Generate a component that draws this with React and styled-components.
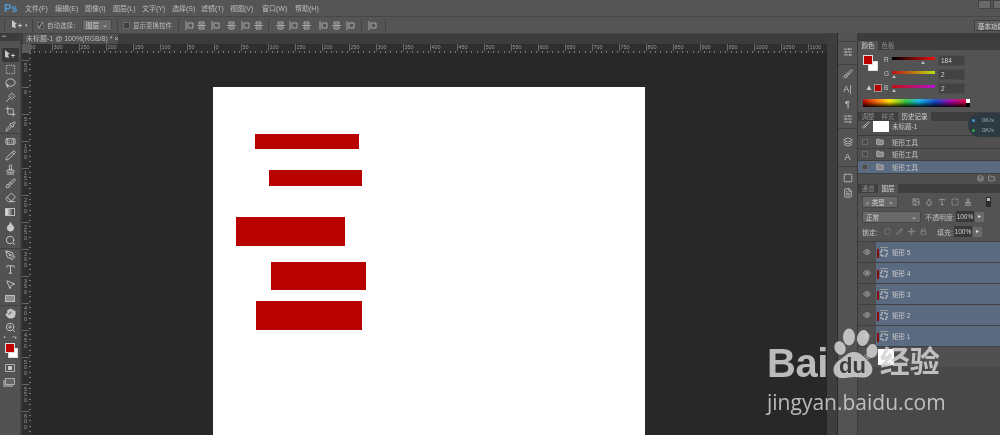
import styled, { createGlobalStyle } from "styled-components";
import {
  MousePointer2,
  SquareDashed,
  Lasso,
  Wand,
  Crop,
  Pipette,
  Bandage,
  Pencil,
  Stamp,
  Brush,
  Eraser,
  Droplet,
  Search,
  PenTool,
  Type,
  Hand,
  ZoomIn,
  Eye,
  Lock,
  Move,
  Image,
  Folder,
  SlidersHorizontal,
  Square,
  Layers,
  FileText,
} from "lucide-react";

const GlobalStyle = createGlobalStyle`
  html, body {
    margin: 0;
    padding: 0;
    background: #535353;
  }
  * {
    box-sizing: border-box;
  }
`;

const FONT = `"Liberation Sans", "Noto Sans CJK SC", sans-serif`;

const Root = styled.div`
  position: relative;
  display: flex;
  flex-direction: column;
  width: 1000px;
  height: 435px;
  overflow: hidden;
  background: #535353;
  color: #c4c4c4;
  font-family: ${FONT};
  font-size: 6.5px;
  filter: blur(0.3px);
`;

const MenuBar = styled.div`
  display: flex;
  align-items: center;
  height: 16px;
  flex: none;
  padding-left: 4px;
  background: #555555;
`;
const PsLogo = styled.span`
  width: 21px;
  color: #4f9bd8;
  font-size: 11px;
  font-weight: bold;
`;
const MenuItem = styled.span`
  width: ${(p) => p.$w}px;
  color: #bdbdbd;
  font-size: 7px;
  white-space: nowrap;
`;
const WindowButtons = styled.div`
  display: flex;
  gap: 2px;
  margin-left: auto;
  margin-right: -6px;
  align-self: flex-start;
`;
const WindowButton = styled.div`
  width: 13px;
  height: 9px;
  background: #6a6a6a;
  border: 1px solid #444;
`;

const OptionsBar = styled.div`
  display: flex;
  align-items: center;
  height: 17px;
  flex: none;
  background: #555555;
  border-top: 1px solid #474747;
  padding-left: 4px;
`;
const OptionSep = styled.div`
  width: 1px;
  height: 13px;
  flex: none;
  background: #444;
  margin: 0 ${(p) => p.$m}px;
`;
const MoveSlot = styled.div`
  display: flex;
  align-items: center;
  gap: 2px;
  margin-left: 6px;
  width: 17px;
  color: #bbb;
  font-size: 5px;
`;
const CheckBox = styled.div`
  display: flex;
  align-items: center;
  justify-content: center;
  width: 7px;
  height: 7px;
  flex: none;
  background: #3f3f3f;
  border: 1px solid #6a6a6a;
  color: #ddd;
  font-size: 7px;
  line-height: 1;
`;
const OptionText = styled.span`
  margin-left: ${(p) => p.$ml || 3}px;
  color: #bdbdbd;
  white-space: nowrap;
`;
const SelectBox = styled.div`
  display: flex;
  align-items: center;
  justify-content: space-between;
  width: ${(p) => p.$w}px;
  height: 12px;
  margin-left: ${(p) => p.$ml || 0}px;
  padding: 0 3px;
  background: #686868;
  border: 1px solid #474747;
  border-radius: 1px;
  color: #d0d0d0;
  font-size: 6.5px;
  flex: none;
`;
const AlignIcon = styled.svg`
  width: 9px;
  height: 9px;
  margin-left: ${(p) => p.$gap}px;
  flex: none;
`;
const WorkspaceButton = styled.div`
  margin-left: auto;
  margin-right: -6px;
  width: 32px;
  height: 11px;
  padding-left: 3px;
  background: #5f5f5f;
  border: 1px solid #404040;
  color: #cfcfcf;
  white-space: nowrap;
  overflow: hidden;
  flex: none;
`;

const Workspace = styled.div`
  display: flex;
  flex: 1;
  min-height: 0;
  background: #3a3a3a;
`;

const ToolColumn = styled.div`
  display: flex;
  flex-direction: column;
  width: 21px;
  flex: none;
  background: #525252;
  border-right: 1px solid #444;
`;
const ToolHead = styled.div`
  height: 8px;
  background: #3c3c3c;
  color: #aaa;
  font-size: 6px;
  line-height: 6px;
  padding-left: 2px;
  margin-bottom: 7px;
`;
const ToolGroup = styled.div`
  display: flex;
  flex-direction: column;
  align-items: center;
  padding: 0 1px;
  border-bottom: ${(p) => (p.$last ? "none" : "1px solid #404040")};
`;
const ToolButton = styled.div`
  display: flex;
  align-items: center;
  justify-content: center;
  width: 17px;
  height: 14.2px;
  flex: none;
  border-radius: 1px;
  color: #c8c8c8;
  background: ${(p) => (p.$active ? "#383838" : "transparent")};
`;
const GradientTool = styled.div`
  width: 10px;
  height: 8px;
  border: 1px solid #bbb;
  background: linear-gradient(90deg, #eee, #333);
`;
const RectTool = styled.div`
  width: 10px;
  height: 7px;
  background: #8f8f8f;
  border: 1px solid #bdbdbd;
`;
const MiniSwatch = styled.div`
  display: flex;
  justify-content: space-between;
  align-items: center;
  width: 13px;
  height: 7px;
  margin: -1px 0 2px;
  color: #bbb;
  font-size: 6px;
`;
const Swatches = styled.div`
  position: relative;
  width: 15px;
  height: 18px;
  flex: none;
`;
const Swatch = styled.div`
  position: absolute;
  left: ${(p) => p.$x}px;
  top: ${(p) => p.$y}px;
  width: ${(p) => p.$s}px;
  height: ${(p) => p.$s}px;
  background: ${(p) => p.$c};
  border: 1px solid #ddd;
`;
const MaskTool = styled.div`
  width: 10px;
  height: 8px;
  margin: 3px 0 6px;
  border: 1px solid #aaa;
  background: radial-gradient(circle, #ccc 0 2px, #555 2.5px);
`;
const ScreenTool = styled.div`
  width: 10px;
  height: 7px;
  border: 1px solid #aaa;
  box-shadow: -2px 2px 0 #8a8a8a;
  background: #666;
`;

const DocArea = styled.div`
  display: flex;
  flex-direction: column;
  flex: 1;
  min-width: 0;
  margin-left: 1px;
`;
const TabStrip = styled.div`
  display: flex;
  height: 11px;
  flex: none;
  padding-left: 1px;
  background: #3c3c3c;
  border-top: 1px solid #444;
`;
const DocTab = styled.div`
  width: 95px;
  height: 10px;
  padding-left: 3px;
  background: #4f4f4f;
  color: #bcbcbc;
  font-size: 7px;
  line-height: 10px;
  white-space: nowrap;
`;
const TopRulerRow = styled.div`
  display: flex;
  height: 9px;
  flex: none;
`;
const RulerCorner = styled.div`
  width: 9px;
  flex: none;
  background: #5a5a5a;
`;
const TopRuler = styled.div`
  display: flex;
  flex: 1;
  overflow: hidden;
  background-color: #2e2e2e;
  background-image: repeating-linear-gradient(
    90deg,
    #777 0 1px,
    transparent 1px 5.4px
  );
  background-size: 100% 2px;
  background-position: 2.5px 100%;
  background-repeat: no-repeat;
`;
const RulerCell = styled.div`
  flex: none;
  width: 27px;
  height: 7px;
  padding-left: 1px;
  border-left: 1px solid #666;
  color: #999;
  font-size: 5.5px;
  line-height: 7px;
  &:first-child {
    margin-left: -6.5px;
  }
`;
const CanvasRow = styled.div`
  display: flex;
  flex: 1;
  min-height: 0;
`;
const SideRuler = styled.div`
  display: flex;
  flex-direction: column;
  width: 9px;
  flex: none;
  overflow: hidden;
  padding-top: 6.5px;
  background-color: #2e2e2e;
  background-image: repeating-linear-gradient(
    180deg,
    #777 0 1px,
    transparent 1px 5.4px
  );
  background-size: 2px 100%;
  background-position: 100% 0;
  background-repeat: no-repeat;
`;
const SideCell = styled.div`
  flex: none;
  height: 27px;
  width: 7px;
  padding-top: 2px;
  border-top: 1px solid #666;
  color: #999;
  font-size: 5.5px;
  line-height: 5.5px;
  text-align: center;
`;
const Canvas = styled.div`
  flex: 1;
  min-width: 0;
  padding: 34px 0 0 182px;
  background: #282828;
`;
const Page = styled.div`
  position: relative;
  width: 432px;
  height: 100%;
  background: #ffffff;
`;
const Shape = styled.div`
  position: absolute;
  left: ${(p) => p.$x}px;
  top: ${(p) => p.$y}px;
  width: ${(p) => p.$w}px;
  height: ${(p) => p.$h}px;
  background: #b80202;
`;
const ScrollStrip = styled.div`
  width: 11px;
  flex: none;
  background: #3e3e3e;
  border-right: 1px solid #2c2c2c;
`;

const Dock = styled.div`
  display: flex;
  flex-direction: column;
  align-items: center;
  width: 20px;
  flex: none;
  padding-top: 8px;
  background: #535353;
  border-right: 1px solid #3a3a3a;
  color: #c4c4c4;
  font-size: 9px;
  line-height: 10px;
`;
const DockGroup = styled.div`
  display: flex;
  flex-direction: column;
  align-items: center;
  gap: 5px;
  width: 100%;
  padding: ${(p) => p.$pt}px 0 ${(p) => p.$pb}px;
  border-top: 1px solid #414141;
`;

const Panels = styled.div`
  display: flex;
  flex-direction: column;
  width: 142px;
  flex: none;
  background: #484848;
`;
const PanelsHead = styled.div`
  height: 8px;
  flex: none;
  background: #3c3c3c;
`;
const TabRow = styled.div`
  display: flex;
  height: 9px;
  flex: none;
  background: #3e3e3e;
`;
const PanelTab = styled.div`
  padding: 0 3.5px;
  color: ${(p) => (p.$active ? "#d2d2d2" : "#8b8b8b")};
  background: ${(p) => (p.$active ? "#535353" : "transparent")};
  font-size: 6.5px;
  line-height: 9px;
  white-space: nowrap;
`;
const ColorPanel = styled.div`
  display: flex;
  flex-direction: column;
  height: 62px;
  flex: none;
  padding: 5px 0 0 5px;
  background: #535353;
`;
const ColorTop = styled.div`
  display: flex;
`;
const ColorSwatches = styled.div`
  position: relative;
  width: 21px;
  height: 41px;
  flex: none;
`;
const WarnRow = styled.div`
  position: absolute;
  left: 2px;
  top: 28px;
  display: flex;
  align-items: center;
  gap: 2px;
  color: #ccc;
  font-size: 8px;
  font-weight: bold;
`;
const WarnSwatch = styled.div`
  width: 6px;
  height: 6px;
  background: #b80202;
  outline: 1px solid #999;
`;
const Sliders = styled.div`
  display: flex;
  flex-direction: column;
  gap: 3px;
`;
const SliderRow = styled.div`
  display: flex;
  align-items: center;
  height: 11px;
`;
const SliderLabel = styled.span`
  width: 8px;
  margin-bottom: 2px;
  color: #c8c8c8;
`;
const SliderTrack = styled.div`
  position: relative;
  width: 43px;
  height: 3px;
  margin: 0 3px 4px 0;
  background: ${(p) => p.$bg};
`;
const SliderThumb = styled.div`
  position: absolute;
  top: 4px;
  left: ${(p) => p.$at}px;
  width: 0;
  height: 0;
  border: 2px solid transparent;
  border-top: 0;
  border-bottom: 3px solid #bdbdbd;
`;
const ValueBox = styled.div`
  width: 27px;
  height: 11px;
  padding-left: 2px;
  background: #434343;
  border: 1px solid #4b4b4b;
  color: #d0d0d0;
  font-size: 6.5px;
  line-height: 9px;
`;
const Spectrum = styled.div`
  position: relative;
  width: 107px;
  height: 8px;
  margin-top: 3px;
  background:
    linear-gradient(180deg, rgba(255, 255, 255, 0.15), rgba(0, 0, 0, 0) 35%, rgba(0, 0, 0, 0.9)),
    linear-gradient(90deg, #b00000, #ff8000 15%, #ffe000 25%, #30c040 40%, #10b0e0 52%, #1040c0 68%, #a000a0 82%, #e00020 100%);
`;
const SpectrumEnd = styled.div`
  position: absolute;
  right: 0;
  top: 0;
  bottom: 0;
  width: 4px;
  background: linear-gradient(180deg, #fff 50%, #000 50%);
`;
const HistoryPanel = styled.div`
  display: flex;
  flex-direction: column;
  height: 63px;
  flex: none;
  background: #505050;
`;
const SnapshotRow = styled.div`
  display: flex;
  align-items: flex-start;
  gap: 3px;
  height: 15px;
  flex: none;
  padding-left: 4px;
  border-bottom: 1px solid #3c3c3c;
  color: #c8c8c8;
`;
const SnapshotThumb = styled.div`
  width: 16px;
  height: 11px;
  background: #fff;
`;
const HistoryRow = styled.div`
  display: flex;
  align-items: center;
  height: 12.5px;
  flex: none;
  padding-left: 4px;
  gap: 8px;
  border-bottom: 1px solid #3f3f3f;
  color: #c8c8c8;
  background: ${(p) => (p.$active ? "#5a6a80" : "transparent")};
`;
const HistoryCheck = styled.div`
  width: 6px;
  height: 6px;
  flex: none;
  border: 1px solid #6a6a6a;
  background: #4a4a4a;
`;
const PanelFooter = styled.div`
  display: flex;
  justify-content: flex-end;
  align-items: center;
  gap: 4px;
  flex: 1;
  padding-right: 5px;
  color: #bbb;
`;
const LayersPanel = styled.div`
  display: flex;
  flex-direction: column;
  flex: 1;
  min-height: 0;
  background: #535353;
`;
const LayerControl = styled.div`
  display: flex;
  align-items: center;
  height: 15px;
  flex: none;
  margin-top: ${(p) => p.$mt || 0}px;
  padding-left: 4px;
  color: #c4c4c4;
  font-size: 7px;
  white-space: nowrap;
`;
const FilterIcons = styled.div`
  display: flex;
  gap: 5px;
  margin-left: 14px;
  color: #b5b5b5;
`;
const FilterToggle = styled.div`
  width: 5px;
  height: 10px;
  margin-left: 14px;
  background: linear-gradient(180deg, #bbb 40%, #2c2c2c 40%);
  border: 1px solid #2c2c2c;
`;
const PercentBox = styled.div`
  width: 18px;
  height: 11px;
  margin-left: 1px;
  background: #383838;
  color: #d0d0d0;
  font-size: 6.5px;
  line-height: 11px;
  text-align: center;
`;
const PercentArrow = styled.div`
  width: 9px;
  height: 10px;
  margin-left: 1px;
  background: #6a6a6a;
  color: #ddd;
  font-size: 6px;
  line-height: 9px;
  text-align: center;
`;
const LockIcons = styled.div`
  display: flex;
  align-items: center;
  gap: 5px;
  margin: 0 10px 0 6px;
  color: #9c9c9c;
`;
const LayerList = styled.div`
  display: flex;
  flex-direction: column;
  margin-top: 2px;
  background: #484848;
  flex: 1;
`;
const LayerRow = styled.div`
  display: flex;
  height: 21px;
  flex: none;
  border-top: 1px solid #404040;
  background: #505050;
`;
const LayerEye = styled.div`
  display: flex;
  align-items: center;
  justify-content: center;
  width: 18px;
  flex: none;
  color: #c0c0c0;
`;
const LayerBody = styled.div`
  display: flex;
  align-items: center;
  flex: 1;
  gap: 4px;
  padding-left: 1px;
  background: ${(p) => (p.$active ? "#5a6a80" : "transparent")};
  color: #d0d0d0;
`;
const LayerThumb = styled.div`
  width: 16px;
  height: 16px;
  margin-left: 1px;
  background: #fff;
`;

const Watermark = styled.div`
  position: absolute;
  left: 767px;
  top: 330px;
  width: 182px;
  color: #d4d4d4;
  opacity: 0.85;
  pointer-events: none;
`;
const WatermarkLogo = styled.div`
  display: flex;
  align-items: flex-end;
  height: 54px;
`;
const WatermarkBai = styled.span`
  font-size: 40px;
  font-weight: bold;
  line-height: 42px;
  letter-spacing: -0.5px;
`;
const WatermarkPaw = styled.svg`
  width: 54px;
  height: 56px;
  flex: none;
  margin-left: -2px;
`;
const WatermarkCn = styled.span`
  margin: 0 0 5px 0;
  font-size: 30px;
  font-weight: bold;
  line-height: 34px;
  white-space: nowrap;
`;
const WatermarkUrl = styled.div`
  margin-top: 5px;
  font-family: "Open Sans", sans-serif;
  font-size: 21px;
  line-height: 26px;
  white-space: nowrap;
`;
const SpeedPill = styled.div`
  position: absolute;
  left: 968px;
  top: 113px;
  display: flex;
  flex-direction: column;
  justify-content: center;
  gap: 4px;
  width: 32px;
  height: 24px;
  padding-left: 4px;
  border-radius: 12px 0 0 12px;
  background: #2e3a42;
  color: #9aa;
  font-size: 6px;
`;
const SpeedRow = styled.div`
  display: flex;
  align-items: center;
  gap: 7px;
`;
const SpeedDot = styled.span`
  width: 3px;
  height: 3px;
  border-radius: 50%;
  background: ${(p) => p.$c};
`;

const menus = [
  ["文件(F)", 30],
  ["编辑(E)", 30],
  ["图像(I)", 28],
  ["图层(L)", 29],
  ["文字(Y)", 30],
  ["选择(S)", 29],
  ["滤镜(T)", 29],
  ["视图(V)", 32],
  ["窗口(W)", 33],
  ["帮助(H)", 30],
];

const alignGroups = [
  [0, 3, 5, 7, 5, 4],
  [2, 4, 4, 8, 4, 5],
];

const topLabels = [350, 300, 250, 200, 150, 100, 50, 0];
for (let i = 50; i <= 1100; i += 50) topLabels.push(i);
const sideLabels = ["50", "0"];
for (let i = 50; i <= 600; i += 50) sideLabels.push(String(i));

const shapes = [
  { x: 42, y: 47, w: 104, h: 15 },
  { x: 56, y: 83, w: 93, h: 16 },
  { x: 23, y: 130, w: 109, h: 29 },
  { x: 58, y: 175, w: 95, h: 28 },
  { x: 43, y: 214, w: 106, h: 29 },
];

const AlignGlyph = ({ gap, index }) => (
  <AlignIcon $gap={gap} viewBox="0 0 9 9" fill="none" stroke="#a8a8a8">
    {index % 2 ? (
      <path d="M0 4.5h9M2 1h5v2H2zM2 6h5v2H2z" />
    ) : (
      <path d="M1 0v9M3 2h5v5H3z" />
    )}
  </AlignIcon>
);

const MoveGlyph = () => (
  <svg width="12" height="10" viewBox="0 0 12 10" fill="#c8c8c8">
    <path d="M1 0l5 4-2 .5L5 8 1 7z" />
    <path d="M7 5h1.5V3.5h1V5H11v1H9.500v1.500h-1V6H7z" />
  </svg>
);

const LayerGlyph = () => (
  <svg width="11" height="11" viewBox="0 0 11 11" fill="none">
    <rect x="0" y="2" width="2" height="9" fill="#8a0c0c" />
    <path d="M3 0.500h8" stroke="#999" />
    <path d="M4 3h6v6H4z" stroke="#ddd" strokeDasharray="2 1" />
  </svg>
);

const PawLogo = () => (
  <WatermarkPaw viewBox="0 0 54 56">
    <g fill="#d4d4d4">
      <ellipse cx="14" cy="20" rx="5.500" ry="7" transform="rotate(-20 14 20)" />
      <ellipse cx="23" cy="9" rx="6" ry="8.500" />
      <ellipse cx="37" cy="10" rx="6" ry="8" transform="rotate(10 37 10)" />
      <ellipse cx="46" cy="23" rx="5.500" ry="7" transform="rotate(10 46 23)" />
      <path d="M28 24c7 0 9 5 14 9 5 5 6 10 2 14-4 4-10 2-16 2s-13 3-18-1c-4-4-3-11 2-15 6-3 9-9 16-9z" />
    </g>
    <text x="13" y="45" fill="#3a3a3a" fontFamily="Liberation Sans" fontWeight="bold" fontSize="22">
      du
    </text>
  </WatermarkPaw>
);

const App = () => {
  return (
    <>
      <GlobalStyle />
      <Root>
        <MenuBar>
          <PsLogo>Ps</PsLogo>
          {menus.map(([label, w]) => (
            <MenuItem key={label} $w={w}>
              {label}
            </MenuItem>
          ))}
          <WindowButtons>
            <WindowButton />
            <WindowButton />
          </WindowButtons>
        </MenuBar>

        <OptionsBar>
          <OptionSep $m={0} />
          <MoveSlot>
            <MoveGlyph />
            <span>▾</span>
          </MoveSlot>
          <OptionSep $m={4} />
          <CheckBox>✓</CheckBox>
          <OptionText>自动选择：</OptionText>
          <SelectBox $w={30} $ml={2.5}>
            图层<span>⌄</span>
          </SelectBox>
          <OptionSep $m={5} />
          <CheckBox />
          <OptionText>显示变换控件</OptionText>
          <OptionSep $m={6} />
          {alignGroups[0].map((gap, i) => (
            <AlignGlyph key={i} gap={gap} index={i} />
          ))}
          <OptionSep $m={5} />
          {alignGroups[1].map((gap, i) => (
            <AlignGlyph key={i} gap={gap} index={i + 1} />
          ))}
          <OptionSep $m={6} />
          <AlignGlyph gap={0} index={0} />
          <OptionSep $m={8} />
          <WorkspaceButton>基本功能</WorkspaceButton>
        </OptionsBar>

        <Workspace>
          <ToolColumn>
            <ToolHead>••</ToolHead>
            <ToolGroup>
              <ToolButton $active>
                <MoveGlyph />
              </ToolButton>
              <ToolButton><SquareDashed size={11} /></ToolButton>
              <ToolButton><Lasso size={11} /></ToolButton>
              <ToolButton><Wand size={11} /></ToolButton>
              <ToolButton><Crop size={11} /></ToolButton>
              <ToolButton><Pipette size={11} /></ToolButton>
            </ToolGroup>
            <ToolGroup>
              <ToolButton><Bandage size={11} /></ToolButton>
              <ToolButton><Pencil size={11} /></ToolButton>
              <ToolButton><Stamp size={11} /></ToolButton>
              <ToolButton><Brush size={11} /></ToolButton>
              <ToolButton><Eraser size={11} /></ToolButton>
              <ToolButton><GradientTool /></ToolButton>
              <ToolButton><Droplet size={11} fill="#c8c8c8" /></ToolButton>
              <ToolButton><Search size={11} /></ToolButton>
            </ToolGroup>
            <ToolGroup>
              <ToolButton><PenTool size={11} /></ToolButton>
              <ToolButton><Type size={11} /></ToolButton>
              <ToolButton><MousePointer2 size={11} /></ToolButton>
              <ToolButton><RectTool /></ToolButton>
            </ToolGroup>
            <ToolGroup $last>
              <ToolButton><Hand size={11} fill="#c8c8c8" /></ToolButton>
              <ToolButton><ZoomIn size={11} /></ToolButton>
              <MiniSwatch>
                <span>▪</span>
                <span>↷</span>
              </MiniSwatch>
              <Swatches>
                <Swatch $x={5} $y={5} $s={10} $c="#ffffff" />
                <Swatch $x={2} $y={0} $s={10} $c="#c00000" />
              </Swatches>
              <MaskTool />
              <ScreenTool />
            </ToolGroup>
          </ToolColumn>

          <DocArea>
            <TabStrip>
              <DocTab>未标题-1 @ 100%(RGB/8) * ×</DocTab>
            </TabStrip>
            <TopRulerRow>
              <RulerCorner />
              <TopRuler>
                {topLabels.map((label, i) => (
                  <RulerCell key={i}>{label}</RulerCell>
                ))}
              </TopRuler>
            </TopRulerRow>
            <CanvasRow>
              <SideRuler>
                {sideLabels.map((label, i) => (
                  <SideCell key={i}>
                    {label.split("").map((digit, j) => (
                      <div key={j}>{digit}</div>
                    ))}
                  </SideCell>
                ))}
              </SideRuler>
              <Canvas>
                <Page>
                  {shapes.map((s, i) => (
                    <Shape key={i} $x={s.x} $y={s.y} $w={s.w} $h={s.h} />
                  ))}
                </Page>
              </Canvas>
            </CanvasRow>
          </DocArea>
          <ScrollStrip />

          <Dock>
            <DockGroup $pt={5} $pb={7}>
              <SlidersHorizontal size={10} />
            </DockGroup>
            <DockGroup $pt={4} $pb={4}>
              <Brush size={10} />
              <span>A|</span>
              <span>¶</span>
              <SlidersHorizontal size={10} />
            </DockGroup>
            <DockGroup $pt={8} $pb={4}>
              <Layers size={10} />
              <span>A</span>
            </DockGroup>
            <DockGroup $pt={6} $pb={4}>
              <Square size={10} />
              <FileText size={10} />
            </DockGroup>
          </Dock>

          <Panels>
            <PanelsHead />
            <TabRow>
              <PanelTab $active>颜色</PanelTab>
              <PanelTab>色板</PanelTab>
            </TabRow>
            <ColorPanel>
              <ColorTop>
                <ColorSwatches>
                  <Swatch $x={5} $y={6} $s={10} $c="#ffffff" />
                  <Swatch $x={0} $y={0} $s={10} $c="#b80202" />
                  <WarnRow>
                    ▲<WarnSwatch />
                  </WarnRow>
                </ColorSwatches>
                <Sliders>
                  <SliderRow>
                    <SliderLabel>R</SliderLabel>
                    <SliderTrack $bg="linear-gradient(90deg,#000,#ee1010)">
                      <SliderThumb $at={29} />
                    </SliderTrack>
                    <ValueBox>184</ValueBox>
                  </SliderRow>
                  <SliderRow>
                    <SliderLabel>G</SliderLabel>
                    <SliderTrack $bg="linear-gradient(90deg,#c01010,#b8e010)">
                      <SliderThumb $at={0} />
                    </SliderTrack>
                    <ValueBox>2</ValueBox>
                  </SliderRow>
                  <SliderRow>
                    <SliderLabel>B</SliderLabel>
                    <SliderTrack $bg="linear-gradient(90deg,#c01010,#b810d0)">
                      <SliderThumb $at={0} />
                    </SliderTrack>
                    <ValueBox>2</ValueBox>
                  </SliderRow>
                </Sliders>
              </ColorTop>
              <Spectrum>
                <SpectrumEnd />
              </Spectrum>
            </ColorPanel>

            <TabRow>
              <PanelTab>调整</PanelTab>
              <PanelTab>样式</PanelTab>
              <PanelTab $active>历史记录</PanelTab>
            </TabRow>
            <HistoryPanel>
              <SnapshotRow>
                <Brush size={8} />
                <SnapshotThumb />
                未标题-1
              </SnapshotRow>
              {[false, false, true].map((active, i) => (
                <HistoryRow key={i} $active={active}>
                  <HistoryCheck />
                  <Folder size={8} fill="#888" />
                  矩形工具
                </HistoryRow>
              ))}
              <PanelFooter>
                <Layers size={7} />
                <Folder size={7} />
              </PanelFooter>
            </HistoryPanel>

            <TabRow>
              <PanelTab>通道</PanelTab>
              <PanelTab $active>图层</PanelTab>
            </TabRow>
            <LayersPanel>
              <LayerControl $mt={1}>
                <SelectBox $w={36}>
                  ⌕ 类型<span>⌄</span>
                </SelectBox>
                <FilterIcons>
                  <Image size={8} />
                  <Droplet size={8} />
                  <Type size={8} />
                  <SquareDashed size={8} />
                  <Stamp size={8} />
                </FilterIcons>
                <FilterToggle />
              </LayerControl>
              <LayerControl>
                <SelectBox $w={59}>
                  正常<span>⌄</span>
                </SelectBox>
                <OptionText $ml={4}>不透明度:</OptionText>
                <PercentBox>100%</PercentBox>
                <PercentArrow>▸</PercentArrow>
              </LayerControl>
              <LayerControl>
                锁定:
                <LockIcons>
                  <SquareDashed size={7} />
                  <Pencil size={7} />
                  <Move size={7} />
                  <Lock size={7} />
                </LockIcons>
                填充:
                <PercentBox>100%</PercentBox>
                <PercentArrow>▸</PercentArrow>
              </LayerControl>
              <LayerList>
                {[5, 4, 3, 2, 1].map((n) => (
                  <LayerRow key={n}>
                    <LayerEye>
                      <Eye size={8} />
                    </LayerEye>
                    <LayerBody $active>
                      <LayerGlyph />
                      矩形 {n}
                    </LayerBody>
                  </LayerRow>
                ))}
                <LayerRow>
                  <LayerEye>
                    <Eye size={8} />
                  </LayerEye>
                  <LayerBody>
                    <LayerThumb />
                  </LayerBody>
                </LayerRow>
              </LayerList>
            </LayersPanel>
          </Panels>
        </Workspace>

        <SpeedPill>
          <SpeedRow>
            <SpeedDot $c="#3a9ad9" />
            0K/s
          </SpeedRow>
          <SpeedRow>
            <SpeedDot $c="#2ea84a" />
            0K/s
          </SpeedRow>
        </SpeedPill>

        <Watermark>
          <WatermarkLogo>
            <WatermarkBai>Bai</WatermarkBai>
            <PawLogo />
            <WatermarkCn>经验</WatermarkCn>
          </WatermarkLogo>
          <WatermarkUrl>jingyan.baidu.com</WatermarkUrl>
        </Watermark>
      </Root>
    </>
  );
};

export default App;
